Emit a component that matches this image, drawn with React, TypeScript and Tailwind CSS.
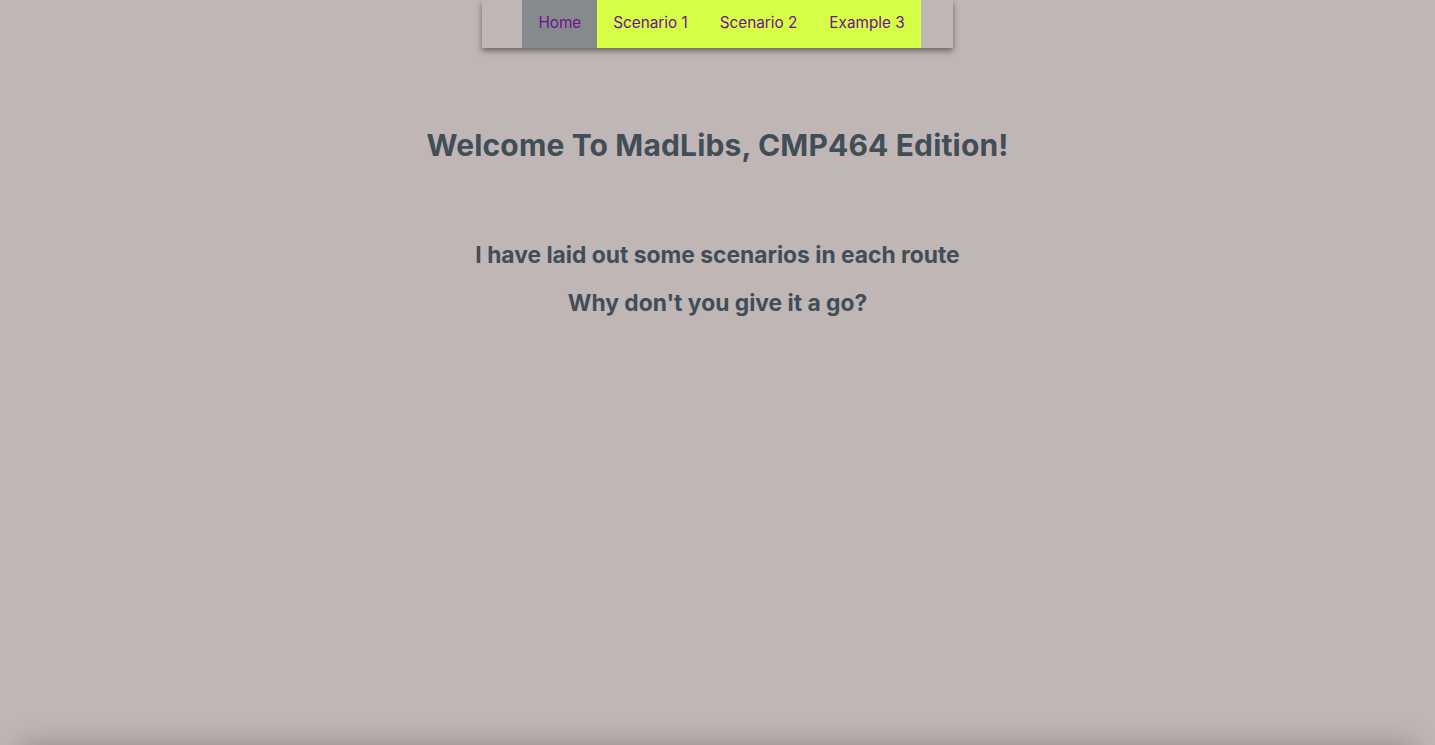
const links = ['Home', 'Scenario 1', 'Scenario 2', 'Example 3'];

function NavBar() {
  return (
    <nav className="flex justify-center">
      <ul className="flex h-12 pl-10 pr-8 shadow-[0_3px_6px_rgba(0,0,0,0.45)]">
        {links.map((label, i) => (
          <li
            key={label}
            className={
              'flex items-center whitespace-nowrap px-4 pb-0.5 text-[15.3px] text-[#6e1190] ' +
              (i === 0 ? 'bg-[#858b8c]' : 'bg-[#d5ff44]')
            }
          >
            {label}
          </li>
        ))}
      </ul>
    </nav>
  );
}

export default function App() {
  return (
    <div className="h-[745px] overflow-hidden bg-[#c0b6b5] font-['Inter','Noto_Sans',sans-serif]">
      <div className="h-[745px]">
        <NavBar />
        <main className="flex flex-col items-center text-[#414e57]">
          <h1 className="mt-[76px] text-[30px] font-bold leading-[42px] tracking-[0.15px]">Welcome To MadLibs, CMP464 Edition!</h1>
          <h2 className="mt-[74px] text-[22.8px] font-bold leading-[30px]">I have laid out some scenarios in each route</h2>
          <h2 className="mt-[18px] text-[22.8px] font-bold leading-[30px]">Why don't you give it a go?</h2>
        </main>
      </div>
      <div className="mx-5 h-10 bg-[#c0b6b5] shadow-[0_0_28px_rgba(0,0,0,0.25)]" />
    </div>
  );
}
